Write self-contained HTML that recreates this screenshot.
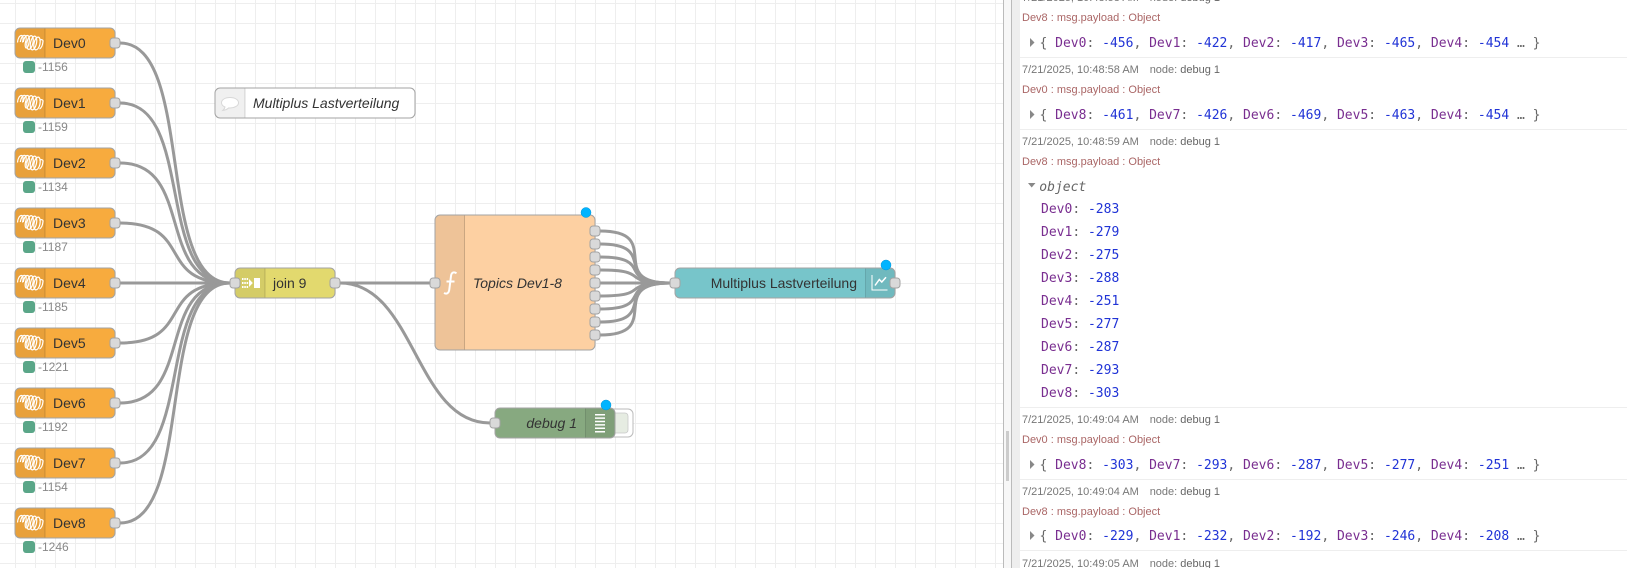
<!DOCTYPE html>
<html><head><meta charset="utf-8"><style>
html,body{margin:0;padding:0;width:1627px;height:568px;overflow:hidden;background:#fff}
svg{position:absolute;left:0;top:0;display:block}
text{font-family:"Liberation Sans",sans-serif;white-space:pre}
.l{font-size:14px;fill:#333}
.i{font-size:14px;fill:#333;font-style:italic}
.s{font-size:12px;fill:#888}
.d{font-size:11px;fill:#777}
.d .n{fill:#666}
.t{font-size:11px;fill:#aa6666}
.m{font-family:"DejaVu Sans Mono","Liberation Mono",monospace;font-size:13px;fill:#666}
.k{fill:#792e90}.v{fill:#2033d6}
.w{fill:none;stroke:#999;stroke-width:3}
.o{fill:none;stroke:#fff;stroke-width:5;stroke-opacity:.5}
.p{fill:#d9d9d9;stroke:#a3a3a3;stroke-width:1}
.n1{stroke:#a3a3a3;stroke-width:1}
</style></head><body>
<svg width="1627" height="568" viewBox="0 0 1627 568" xmlns="http://www.w3.org/2000/svg">
<defs>
<pattern id="g" x="15" y="23" width="20" height="20" patternUnits="userSpaceOnUse"><path d="M0.5 0V20M0 0.5H20" stroke="#eee" stroke-width="1" fill="none"/></pattern>
<g id="coil" fill="none" stroke="#fff" stroke-width="1.200">
<path d="M2.500 14.500C2.800 10.500 4.500 7.500 6.500 7.500C8.500 7.500 8.300 11.500 7.500 14.500"/>
<path d="M5.300 14C5.800 10.500 7.500 7.300 9.500 7.300C11.500 7.300 11.500 11.500 10.700 15"/>
<path d="M8.300 14C8.800 10.500 10.500 7.300 12.500 7.500C15 7.800 14.700 13 13.500 17C12.500 20.500 10.500 21 10.200 18C10 16.500 10.300 14.500 11 12.500"/>
<ellipse cx="15" cy="14.500" rx="3" ry="7" transform="rotate(12 15 14.500)"/>
<ellipse cx="18.500" cy="15" rx="3" ry="7" transform="rotate(12 18.500 15)"/>
<ellipse cx="22" cy="15.500" rx="3" ry="6.500" transform="rotate(12 22 15.500)"/>
<path d="M24.500 12.500C26 11 28.200 11.500 28 13.500C27.700 16.500 26.500 20 24.500 21"/>
</g>
<g id="devnode">
<rect class="n1" x="15" y="28" width="100" height="30" rx="5" fill="#f7ab3e"/>
<path d="M20 28.500H45V57.500H20A4.500 4.500 0 0 1 15.500 53V33A4.500 4.500 0 0 1 20 28.500Z" fill="#000" fill-opacity=".06"/>
<path d="M45 28.500V57.500" stroke="#000" stroke-opacity=".15"/>
<use href="#coil" x="15" y="28"/>
<rect class="p" x="110" y="38" width="10" height="10" rx="3"/>
<rect x="23" y="61" width="12" height="12" rx="3" fill="#5aa688"/>
</g>
</defs>
<rect x="0" y="0" width="1003" height="568" fill="#fff"/>
<rect x="0" y="0" width="1003" height="568" fill="url(#g)"/>

<!-- wires -->
<g class="o">
<path d="M120 43C195 43 155 283 230 283"/><path d="M120 103C195 103 155 283 230 283"/><path d="M120 163C195 163 155 283 230 283"/><path d="M120 223C195 223 155 283 230 283"/><path d="M120 283C195 283 155 283 230 283"/><path d="M120 343C195 343 155 283 230 283"/><path d="M120 403C195 403 155 283 230 283"/><path d="M120 463C195 463 155 283 230 283"/><path d="M120 523C195 523 155 283 230 283"/>
</g>
<g class="w">
<path d="M120 43C195 43 155 283 230 283"/><path d="M120 103C195 103 155 283 230 283"/><path d="M120 163C195 163 155 283 230 283"/><path d="M120 223C195 223 155 283 230 283"/><path d="M120 283C195 283 155 283 230 283"/><path d="M120 343C195 343 155 283 230 283"/><path d="M120 403C195 403 155 283 230 283"/><path d="M120 463C195 463 155 283 230 283"/><path d="M120 523C195 523 155 283 230 283"/>
<path d="M340 283H430"/><path d="M340 283C415 283 415 423 490 423"/>
</g>
<g class="w">
<path d="M600 231C665.400 231 604.600 283 670 283"/>
<path d="M600 244C660.100 244 609.900 283 670 283"/>
<path d="M600 257C656 257 614 283 670 283"/>
<path d="M600 270C653.400 270 616.600 283 670 283"/>
<path d="M600 283H670"/>
<path d="M600 296C653.400 296 616.600 283 670 283"/>
<path d="M600 309C656 309 614 283 670 283"/>
<path d="M600 322C660.100 322 609.900 283 670 283"/>
<path d="M600 335C665.400 335 604.600 283 670 283"/>
</g>

<!-- Dev nodes -->
<g><use href="#devnode"/><text class="l" x="53" y="48">Dev0</text><text class="s" x="38" y="71">-1156</text></g>
<g transform="translate(0 60)"><use href="#devnode"/><text class="l" x="53" y="48">Dev1</text><text class="s" x="38" y="71">-1159</text></g>
<g transform="translate(0 120)"><use href="#devnode"/><text class="l" x="53" y="48">Dev2</text><text class="s" x="38" y="71">-1134</text></g>
<g transform="translate(0 180)"><use href="#devnode"/><text class="l" x="53" y="48">Dev3</text><text class="s" x="38" y="71">-1187</text></g>
<g transform="translate(0 240)"><use href="#devnode"/><text class="l" x="53" y="48">Dev4</text><text class="s" x="38" y="71">-1185</text></g>
<g transform="translate(0 300)"><use href="#devnode"/><text class="l" x="53" y="48">Dev5</text><text class="s" x="38" y="71">-1221</text></g>
<g transform="translate(0 360)"><use href="#devnode"/><text class="l" x="53" y="48">Dev6</text><text class="s" x="38" y="71">-1192</text></g>
<g transform="translate(0 420)"><use href="#devnode"/><text class="l" x="53" y="48">Dev7</text><text class="s" x="38" y="71">-1154</text></g>
<g transform="translate(0 480)"><use href="#devnode"/><text class="l" x="53" y="48">Dev8</text><text class="s" x="38" y="71">-1246</text></g>

<!-- comment -->
<rect class="n1" x="215" y="88" width="200" height="30" rx="5" fill="#fff"/>
<path d="M220 88.500H245V117.500H220A4.500 4.500 0 0 1 215.500 113V93A4.500 4.500 0 0 1 220 88.500Z" fill="#000" fill-opacity=".06"/>
<path d="M245 88.500V117.500" stroke="#000" stroke-opacity=".15"/>
<path d="M230 97.500C225 97.500 221.500 99.800 221.500 102.700C221.500 104.700 223 106.100 225 107C224.700 108.500 223.800 109.600 222.800 110.500C225.300 110.200 227.200 109.300 228.700 107.900C234.500 108.300 238.500 105.800 238.500 102.700C238.500 99.800 235 97.500 230 97.500Z" fill="#fff" stroke="#d8d8d8" stroke-width="1"/>
<text class="i" x="253" y="108">Multiplus Lastverteilung</text>

<!-- join -->
<rect class="n1" x="235" y="268" width="100" height="30" rx="5" fill="#e2d96e"/>
<path d="M240 268.500H265V297.500H240A4.500 4.500 0 0 1 235.500 293V273A4.500 4.500 0 0 1 240 268.500Z" fill="#000" fill-opacity=".06"/>
<path d="M265 268.500V297.500" stroke="#000" stroke-opacity=".15"/>
<g fill="#fff"><rect x="242" y="278" width="1.500" height="2"/><rect x="244.300" y="278" width="1.500" height="2"/><rect x="246.600" y="278" width="1.500" height="2"/><rect x="242" y="282" width="1.500" height="2"/><rect x="244.300" y="282" width="1.500" height="2"/><rect x="246.600" y="282" width="1.500" height="2"/><rect x="242" y="286" width="1.500" height="2"/><rect x="244.300" y="286" width="1.500" height="2"/><rect x="246.600" y="286" width="1.500" height="2"/><path d="M249 279L252.800 283L249 287Z"/><rect x="254" y="278" width="6" height="10"/></g>
<text class="l" x="273" y="288">join 9</text>
<rect class="p" x="230" y="278" width="10" height="10" rx="3"/>
<rect class="p" x="330" y="278" width="10" height="10" rx="3"/>

<!-- function -->
<rect class="n1" x="435" y="215" width="160" height="135" rx="5" fill="#fdd0a2"/>
<path d="M440 215.500H465V349.500H440A4.500 4.500 0 0 1 435.500 345V220A4.500 4.500 0 0 1 440 215.500Z" fill="#000" fill-opacity=".06"/>
<path d="M464.500 215.500V349.500" stroke="#000" stroke-opacity=".15"/>
<path d="M456.500 273.200C453.500 271.500 451.500 272.500 451 276L449.300 289.500C448.800 293.500 446.500 294.300 444 293M446.500 281.500H454.500" fill="none" stroke="#fff" stroke-width="2"/>
<text class="i" x="473" y="288">Topics Dev1-8</text>
<rect class="p" x="430" y="278" width="10" height="10" rx="3"/>
<rect class="p" x="590" y="226" width="10" height="10" rx="3"/>
<rect class="p" x="590" y="239" width="10" height="10" rx="3"/>
<rect class="p" x="590" y="252" width="10" height="10" rx="3"/>
<rect class="p" x="590" y="265" width="10" height="10" rx="3"/>
<rect class="p" x="590" y="278" width="10" height="10" rx="3"/>
<rect class="p" x="590" y="291" width="10" height="10" rx="3"/>
<rect class="p" x="590" y="304" width="10" height="10" rx="3"/>
<rect class="p" x="590" y="317" width="10" height="10" rx="3"/>
<rect class="p" x="590" y="330" width="10" height="10" rx="3"/>
<circle cx="586" cy="212.500" r="5" fill="#00b4ff" stroke="#0094d8" stroke-width=".5"/>

<!-- chart -->
<rect class="n1" x="675" y="268" width="220" height="30" rx="5" fill="#77c5ca"/>
<path d="M866 268.500H890A4.500 4.500 0 0 1 894.500 273V293A4.500 4.500 0 0 1 890 297.500H866Z" fill="#000" fill-opacity=".06"/>
<path d="M865.500 268.500V297.500" stroke="#000" stroke-opacity=".15"/>
<path d="M872 275V290H887.500" fill="none" stroke="#fff" stroke-width="1"/>
<path d="M875 285.500L879.300 279.500L881.800 282L886 277.300" fill="none" stroke="#fff" stroke-width="1.500"/>
<text class="l" x="857" y="288" text-anchor="end">Multiplus Lastverteilung</text>
<rect class="p" x="670" y="278" width="10" height="10" rx="3"/>
<rect class="p" x="890" y="278" width="10" height="10" rx="3"/>
<circle cx="886" cy="265" r="5" fill="#00b4ff" stroke="#0094d8" stroke-width=".5"/>

<!-- debug -->
<rect x="606" y="409" width="27" height="28" rx="5" fill="#fff" stroke="#bbb"/>
<rect x="611" y="413" width="17" height="20" rx="3" fill="#e6ece2" stroke="#c8c8c8" stroke-width=".8"/>
<rect class="n1" x="495" y="408" width="120" height="30" rx="5" fill="#87a980"/>
<path d="M586 408.500H610A4.500 4.500 0 0 1 614.500 413V433A4.500 4.500 0 0 1 610 437.500H586Z" fill="#000" fill-opacity=".06"/>
<path d="M585.500 408.500V437.500" stroke="#000" stroke-opacity=".15"/>
<g stroke="#fff" stroke-width="1.500"><path d="M595 414.700H605M595 418.100H605M595 421.500H605M595 424.900H605M595 428.300H605M595 431.700H605"/></g>
<text class="i" x="577" y="428" text-anchor="end">debug 1</text>
<rect class="p" x="490" y="418" width="10" height="10" rx="3"/>
<circle cx="606" cy="405" r="5" fill="#00b4ff" stroke="#0094d8" stroke-width=".5"/>

<!-- separator -->
<rect x="1003" y="0" width="1" height="568" fill="#bbb"/>
<rect x="1004" y="0" width="8" height="568" fill="#f7f7f7"/>
<rect x="1011" y="0" width="1" height="568" fill="#bbb"/>
<rect x="1012" y="0" width="8" height="568" fill="#eee"/>
<rect x="1006" y="431" width="3" height="50" fill="#ccc"/>
<rect x="1020" y="0" width="607" height="568" fill="#fff"/>

<!-- debug sidebar -->
<g fill="#eee"><rect x="1020" y="57" width="607" height="1"/><rect x="1020" y="129" width="607" height="1"/><rect x="1020" y="407" width="607" height="1"/><rect x="1020" y="479" width="607" height="1"/><rect x="1020" y="550" width="607" height="1"/></g>
<g fill="#888"><path d="M1030 38L1034.500 42.500L1030 47Z"/><path d="M1030 110L1034.500 114.500L1030 119Z"/><path d="M1028 183L1035.500 183L1031.700 187.500Z"/><path d="M1030 460L1034.500 464.500L1030 469Z"/><path d="M1030 531L1034.500 535.500L1030 540Z"/></g>

<text class="d" x="1022" y="1">7/21/2025, 10:48:58 AM</text><text class="d" x="1149.700" y="1">node: <tspan class="n">debug 1</tspan></text>
<text class="t" x="1022" y="21">Dev8 : msg.payload : Object</text>
<text class="m" x="1039.500" y="47">{ <tspan class="k">Dev0</tspan>: <tspan class="v">-456</tspan>, <tspan class="k">Dev1</tspan>: <tspan class="v">-422</tspan>, <tspan class="k">Dev2</tspan>: <tspan class="v">-417</tspan>, <tspan class="k">Dev3</tspan>: <tspan class="v">-465</tspan>, <tspan class="k">Dev4</tspan>: <tspan class="v">-454</tspan> … }</text>

<text class="d" x="1022" y="73">7/21/2025, 10:48:58 AM</text><text class="d" x="1149.700" y="73">node: <tspan class="n">debug 1</tspan></text>
<text class="t" x="1022" y="93">Dev0 : msg.payload : Object</text>
<text class="m" x="1039.500" y="119">{ <tspan class="k">Dev8</tspan>: <tspan class="v">-461</tspan>, <tspan class="k">Dev7</tspan>: <tspan class="v">-426</tspan>, <tspan class="k">Dev6</tspan>: <tspan class="v">-469</tspan>, <tspan class="k">Dev5</tspan>: <tspan class="v">-463</tspan>, <tspan class="k">Dev4</tspan>: <tspan class="v">-454</tspan> … }</text>

<text class="d" x="1022" y="145">7/21/2025, 10:48:59 AM</text><text class="d" x="1149.700" y="145">node: <tspan class="n">debug 1</tspan></text>
<text class="t" x="1022" y="165">Dev8 : msg.payload : Object</text>
<text class="m" x="1039.300" y="191" style="font-style:italic">object</text>
<text class="m" x="1041" y="213"><tspan class="k">Dev0</tspan>: <tspan class="v">-283</tspan></text>
<text class="m" x="1041" y="236"><tspan class="k">Dev1</tspan>: <tspan class="v">-279</tspan></text>
<text class="m" x="1041" y="259"><tspan class="k">Dev2</tspan>: <tspan class="v">-275</tspan></text>
<text class="m" x="1041" y="282"><tspan class="k">Dev3</tspan>: <tspan class="v">-288</tspan></text>
<text class="m" x="1041" y="305"><tspan class="k">Dev4</tspan>: <tspan class="v">-251</tspan></text>
<text class="m" x="1041" y="328"><tspan class="k">Dev5</tspan>: <tspan class="v">-277</tspan></text>
<text class="m" x="1041" y="351"><tspan class="k">Dev6</tspan>: <tspan class="v">-287</tspan></text>
<text class="m" x="1041" y="374"><tspan class="k">Dev7</tspan>: <tspan class="v">-293</tspan></text>
<text class="m" x="1041" y="397"><tspan class="k">Dev8</tspan>: <tspan class="v">-303</tspan></text>

<text class="d" x="1022" y="423">7/21/2025, 10:49:04 AM</text><text class="d" x="1149.700" y="423">node: <tspan class="n">debug 1</tspan></text>
<text class="t" x="1022" y="443">Dev0 : msg.payload : Object</text>
<text class="m" x="1039.500" y="469">{ <tspan class="k">Dev8</tspan>: <tspan class="v">-303</tspan>, <tspan class="k">Dev7</tspan>: <tspan class="v">-293</tspan>, <tspan class="k">Dev6</tspan>: <tspan class="v">-287</tspan>, <tspan class="k">Dev5</tspan>: <tspan class="v">-277</tspan>, <tspan class="k">Dev4</tspan>: <tspan class="v">-251</tspan> … }</text>

<text class="d" x="1022" y="495">7/21/2025, 10:49:04 AM</text><text class="d" x="1149.700" y="495">node: <tspan class="n">debug 1</tspan></text>
<text class="t" x="1022" y="515">Dev8 : msg.payload : Object</text>
<text class="m" x="1039.500" y="540">{ <tspan class="k">Dev0</tspan>: <tspan class="v">-229</tspan>, <tspan class="k">Dev1</tspan>: <tspan class="v">-232</tspan>, <tspan class="k">Dev2</tspan>: <tspan class="v">-192</tspan>, <tspan class="k">Dev3</tspan>: <tspan class="v">-246</tspan>, <tspan class="k">Dev4</tspan>: <tspan class="v">-208</tspan> … }</text>

<text class="d" x="1022" y="567">7/21/2025, 10:49:05 AM</text><text class="d" x="1149.700" y="567">node: <tspan class="n">debug 1</tspan></text>
</svg>
</body></html>
